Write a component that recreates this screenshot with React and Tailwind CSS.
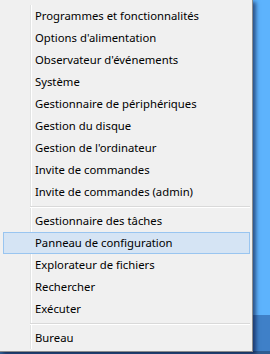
const groups = [
  [
    'Programmes et fonctionnalités',
    "Options d'alimentation",
    "Observateur d'événements",
    'Système',
    'Gestionnaire de périphériques',
    'Gestion du disque',
    "Gestion de l'ordinateur",
    'Invite de commandes',
    'Invite de commandes (admin)',
  ],
  [
    'Gestionnaire des tâches',
    'Panneau de configuration',
    'Explorateur de fichiers',
    'Rechercher',
    'Exécuter',
  ],
  ['Bureau'],
];

const ACTIVE = 'Panneau de configuration';

function MenuItem({ label }) {
  if (label === ACTIVE) {
    return (
      <div className="h-[22px] ml-[3px] mr-[2px] flex items-center pl-[31px] border border-[#99c5f0] bg-[#d5e4f4]">
        {label}
      </div>
    );
  }
  return <div className="h-[22px] flex items-center pl-[35px]">{label}</div>;
}

function Separator() {
  return (
    <div className="h-[7px] pl-[30px] pr-[2px] flex flex-col justify-center">
      <div className="h-px bg-[#d9d9d9]" />
      <div className="h-px bg-white" />
    </div>
  );
}

export default function App() {
  return (
    <div className="w-[270px] h-[354px] overflow-hidden bg-[linear-gradient(to_bottom,#5db3fd_0px,#5db3fd_315px,#3f80c8_315px,#3f80c8_351px,#2e5d92_351px)]">
      <div
        className="w-[253px] h-[352px] bg-[#f0f0f0] border-r border-b border-[#8c8c8c] shadow-[3px_2px_4px_rgba(0,0,40,0.55)] text-[11.3px] text-black"
        style={{ fontFamily: '"Segoe UI", "Noto Sans", "Open Sans", sans-serif' }}
      >
        <div className="pt-[5px]">
          <div className="bg-[linear-gradient(to_right,transparent_30px,#e2e3e3_30px,#e2e3e3_31px,#ffffff_31px,#ffffff_32px,transparent_32px)]">
            {groups.map((items, gi) => (
              <div key={gi}>
                {gi > 0 && <Separator />}
                {items.map((label) => (
                  <MenuItem key={label} label={label} />
                ))}
              </div>
            ))}
          </div>
        </div>
      </div>
    </div>
  );
}
